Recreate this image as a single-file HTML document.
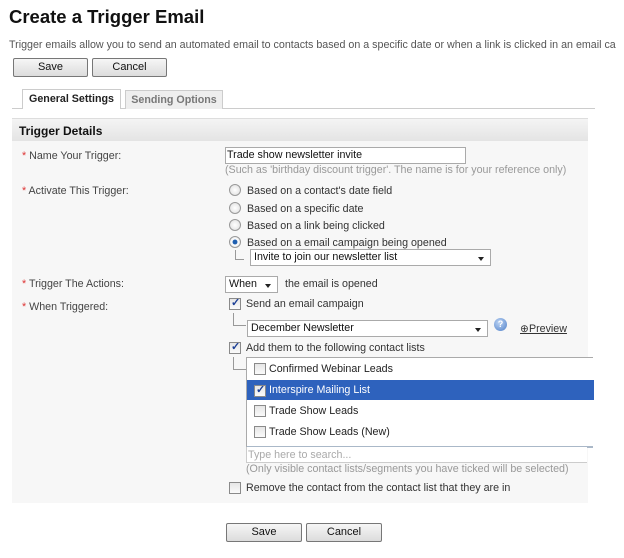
<!DOCTYPE html>
<html><head><style>
body{margin:0;width:624px;height:558px;background:#fff;font-family:"Liberation Sans",sans-serif;font-size:10.7px;color:#333;position:relative;overflow:hidden}
.a{position:absolute;white-space:nowrap}
.btn{position:absolute;height:17px;border:1px solid #777;border-radius:2px;background:linear-gradient(#f6f6f6,#dcdcdc);text-align:center;line-height:17px;font-size:11px;color:#111}
.lbl{position:absolute;left:22px;color:#444}
.lbl b{color:#d33;font-weight:normal}
.sel{position:absolute;height:15px;border:1px solid #aaa;background:#fff;line-height:15px;padding-left:3px;box-sizing:content-box;color:#111}
.sel:after{content:"";position:absolute;right:6px;top:7px;border:3px solid transparent;border-top:4px solid #222}
.sel.np:after{display:none}
.rad{position:absolute;width:10px;height:10px;border:1px solid #999;border-radius:50%;background:radial-gradient(#fff,#ddd)}
.cb{position:absolute;width:10px;height:10px;border:1px solid #8a8a8a;background:linear-gradient(#e6e6e6,#fafafa)}
.ck:after{content:"✓";position:absolute;left:1px;top:-3px;font-size:11px;color:#1c3f95;font-weight:bold}
.tree{position:absolute;border-left:1px solid #999;border-bottom:1px solid #999;width:8px;height:9px}
</style></head><body>
<div class="a" style="left:9px;top:6px;font-size:18.5px;font-weight:bold;color:#111">Create a Trigger Email</div>
<div class="a" style="left:9px;top:39px;color:#555">Trigger emails allow you to send an automated email to contacts based on a specific date or when a link is clicked in an email ca</div>
<div class="btn" style="left:13px;top:58px;width:73px">Save</div>
<div class="btn" style="left:92px;top:58px;width:73px">Cancel</div>
<div class="a" style="left:12px;top:108px;width:583px;height:1px;background:#ccc"></div>
<div class="a" style="left:22px;top:89px;width:97px;height:19px;background:#fff;border:1px solid #ccc;border-bottom:none;font-weight:bold;text-align:center;line-height:19px;color:#222">General Settings</div>
<div class="a" style="left:125px;top:90px;width:96px;height:18px;background:#eee;border:1px solid #ccc;border-bottom:none;font-weight:bold;text-align:center;line-height:18px;color:#777">Sending Options</div>
<div class="a" style="left:12px;top:118px;width:576px;height:385px;background:#f7f7f7"></div>
<div class="a" style="left:12px;top:118px;width:576px;height:22px;background:linear-gradient(#f4f4f4,#e4e4e4);border-top:1px solid #ddd"></div>
<div class="a" style="left:19px;top:124px;font-weight:bold;font-size:12px;color:#111">Trigger Details</div>
<div class="lbl a" style="top:150px"><b>*</b> Name Your Trigger:</div>
<div class="lbl a" style="top:185px"><b>*</b> Activate This Trigger:</div>
<div class="lbl a" style="top:278px"><b>*</b> Trigger The Actions:</div>
<div class="lbl a" style="top:301px"><b>*</b> When Triggered:</div>
<div class="sel np" style="left:225px;top:147px;width:238px;padding-left:1px">Trade show newsletter invite</div>
<div class="a" style="left:225px;top:164px;color:#999">(Such as 'birthday discount trigger'. The name is for your reference only)</div>
<div class="rad" style="left:229px;top:184px"></div><div class="a" style="left:247px;top:185px">Based on a contact's date field</div>
<div class="rad" style="left:229px;top:202px"></div><div class="a" style="left:247px;top:203px">Based on a specific date</div>
<div class="rad" style="left:229px;top:219px"></div><div class="a" style="left:247px;top:220px">Based on a link being clicked</div>
<div class="rad" style="left:229px;top:236px;background:radial-gradient(#1f5fb0 30%,#fff 40%,#ddd)"></div><div class="a" style="left:247px;top:237px">Based on a email campaign being opened</div>
<div class="tree" style="left:235px;top:250px"></div>
<div class="sel" style="left:250px;top:249px;width:236px">Invite to join our newsletter list</div>
<div class="sel" style="left:225px;top:276px;width:48px">When</div>
<div class="a" style="left:285px;top:278px">the email is opened</div>
<div class="cb ck" style="left:229px;top:298px"></div><div class="a" style="left:246px;top:298px">Send an email campaign</div>
<div class="tree" style="left:233px;top:313px;height:12px;width:12px"></div>
<div class="sel" style="left:247px;top:320px;width:236px">December Newsletter</div>
<div class="a" style="left:494px;top:318px;width:13px;height:13px;border-radius:50%;background:radial-gradient(circle at 40% 35%,#bcd4f4,#4f7fc8);color:#fff;font-size:9px;text-align:center;line-height:13px;font-weight:bold">?</div>
<div class="a" style="left:520px;top:322px;text-decoration:underline;color:#333">⊕Preview</div>
<div class="cb ck" style="left:229px;top:342px"></div><div class="a" style="left:246px;top:342px">Add them to the following contact lists</div>
<div class="tree" style="left:233px;top:357px;height:12px;width:12px"></div>
<div class="a" style="left:246px;top:357px;width:346px;height:88px;background:#fff;border-top:1px solid #aaa;border-left:1px solid #aaa;border-bottom:2px solid #aab8c8"></div>
<div class="cb" style="left:254px;top:363px"></div><div class="a" style="left:269px;top:363px;color:#222">Confirmed Webinar Leads</div>
<div class="a" style="left:247px;top:380px;width:347px;height:20px;background:#2e62bd"></div>
<div class="cb ck" style="left:254px;top:385px"></div><div class="a" style="left:269px;top:384px;color:#fff">Interspire Mailing List</div>
<div class="cb" style="left:254px;top:405px"></div><div class="a" style="left:269px;top:405px;color:#222">Trade Show Leads</div>
<div class="cb" style="left:254px;top:426px"></div><div class="a" style="left:269px;top:426px;color:#222">Trade Show Leads (New)</div>
<div class="a" style="left:246px;top:447px;width:340px;height:15px;background:#fff;border-left:1px solid #ccc;border-bottom:1px solid #ccc"></div>
<div class="a" style="left:248px;top:449px;color:#aaa">Type here to search...</div>
<div class="a" style="left:246px;top:463px;color:#999">(Only visible contact lists/segments you have ticked will be selected)</div>
<div class="cb" style="left:229px;top:482px"></div><div class="a" style="left:246px;top:482px">Remove the contact from the contact list that they are in</div>
<div class="btn" style="left:226px;top:523px;width:74px">Save</div>
<div class="btn" style="left:306px;top:523px;width:74px">Cancel</div>
</body></html>
